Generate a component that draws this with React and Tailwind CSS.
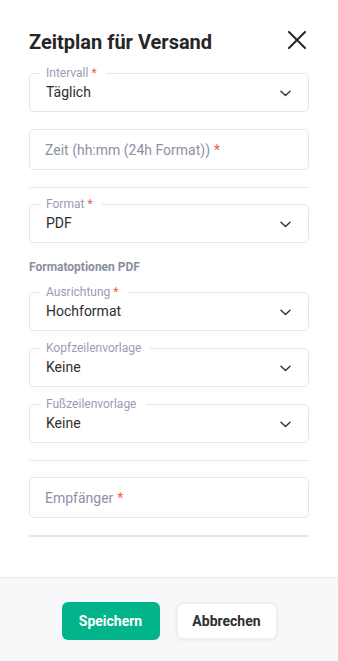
import React from "react";

const font = { fontFamily: "Roboto, 'Noto Sans', sans-serif" };

function Chevron() {
  return (
    <svg width="11" height="7" viewBox="0 0 11 7" fill="none" className="shrink-0">
      <path d="M1 1.2 L5.5 5.5 L10 1.2" stroke="#3a3a3a" strokeWidth="1.5" strokeLinecap="round" strokeLinejoin="round" />
    </svg>
  );
}

function SelectField({ label, required, value }) {
  return (
    <div className="relative h-[39px] rounded-[5px] border border-[#e6e7ec] bg-white pl-[16px] pr-[17px] pt-[8px]">
      <span className="absolute left-[10px] top-[-8px] bg-white pl-[6px] pr-[9px] text-[12px] leading-[14px] text-[#9a9cb2]">
        {label}
        {required && <span className="ml-[3px] text-[#f0603f]">*</span>}
      </span>
      <div className="flex items-center justify-between">
        <span className="text-[14px] leading-[20px] text-[#2e2e2e]">{value}</span>
        <span className="mt-[3px]">
          <Chevron />
        </span>
      </div>
    </div>
  );
}

function InputField({ placeholder }) {
  return (
    <div className="flex h-[41px] items-center rounded-[5px] border border-[#e6e7ec] bg-white px-[15px]">
      <span className="text-[14px] leading-[20px] text-[#8e91a6]">
        {placeholder}
        <span className="ml-[4px] text-[#f0603f]">*</span>
      </span>
    </div>
  );
}

export default function App() {
  return (
    <div className="flex h-[661px] w-[338px] flex-col bg-white" style={font}>
      <div className="flex-1 px-[29px] pt-[28px]">
        <div className="flex items-start justify-between">
          <h2 className="text-[20px] font-bold leading-[28px] text-[#262626]">Zeitplan für Versand</h2>
          <svg width="18" height="18" viewBox="0 0 18 18" fill="none" className="mr-[3px] mt-[3px]">
            <path d="M1 1 L17 17 M17 1 L1 17" stroke="#262626" strokeWidth="2" strokeLinecap="round" />
          </svg>
        </div>

        <div className="mt-[17px]">
          <SelectField label="Intervall" required value="Täglich" />
        </div>
        <div className="mt-[17px]">
          <InputField placeholder="Zeit (hh:mm (24h Format))" />
        </div>
        <div className="mt-[17px] h-px bg-[#e6e7ec]" />
        <div className="mt-[16px]">
          <SelectField label="Format" required value="PDF" />
        </div>
        <div className="mt-[16px] text-[12px] font-bold leading-[16px] text-[#8b8ea3]">Formatoptionen PDF</div>
        <div className="mt-[17px]">
          <SelectField label="Ausrichtung" required value="Hochformat" />
        </div>
        <div className="mt-[17px]">
          <SelectField label="Kopfzeilenvorlage" value="Keine" />
        </div>
        <div className="mt-[17px]">
          <SelectField label="Fußzeilenvorlage" value="Keine" />
        </div>
        <div className="mt-[17px] h-px bg-[#e6e7ec]" />
        <div className="mt-[16px]">
          <InputField placeholder="Empfänger" />
        </div>
        <div className="mt-[17px] h-[2px] bg-[#e6e7ec]" />
      </div>

      <div className="flex h-[84px] justify-center gap-[17px] border-t border-[#e6e7ec] bg-[#f7f8fa] pt-[24px]">
        <button className="h-[38px] w-[98px] rounded-[6px] bg-[#02b48b] text-[14px] font-bold text-white">
          Speichern
        </button>
        <button className="mt-[1px] h-[36px] w-[100px] rounded-[6px] border border-[#eceef2] bg-white text-[14px] font-bold text-[#2e2e2e] shadow-[0_1px_4px_rgba(0,0,0,0.08)]">
          Abbrechen
        </button>
      </div>
    </div>
  );
}
